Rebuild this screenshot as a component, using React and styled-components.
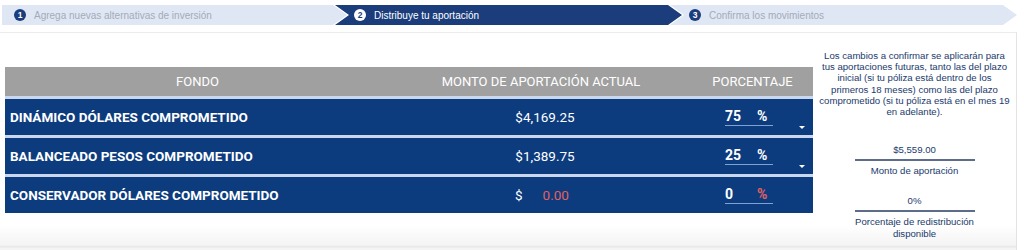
import React from "react";
import styled, { createGlobalStyle } from "styled-components";

const Global = createGlobalStyle`
  html, body { margin: 0; padding: 0; background: #ffffff; }
  body { font-family: Roboto, "Liberation Sans", Arial, sans-serif; width: 1024px; height: 250px; overflow: hidden; }
`;

const Page = styled.div`
  width: 1024px;
  height: 250px;
  display: flex;
  flex-direction: column;
  background: #fff;
`;

const Stepper = styled.div`
  display: flex;
  height: 20px;
  margin-top: 5px;
  padding-left: 2px;
  width: 1015px;
`;

const Step = styled.div`
  flex: 0 0 ${(p) => p.$w}px;
  margin-left: ${(p) => (p.$first ? 0 : -12)}px;
  height: 20px;
  display: flex;
  align-items: center;
  padding-left: ${(p) => (p.$first ? 12 : 19)}px;
  box-sizing: border-box;
  background: ${(p) => (p.$active ? "#1b3d7b" : "#dfe7f4")};
  color: ${(p) => (p.$active ? "#ffffff" : "#a3abb9")};
  font-family: "Liberation Sans", Arial, sans-serif;
  font-size: 10px;
  z-index: ${(p) => p.$z};
  clip-path: ${(p) =>
    p.$first
      ? "polygon(0 0, calc(100% - 14px) 0, 100% 50%, calc(100% - 14px) 100%, 0 100%)"
      : "polygon(0 0, calc(100% - 14px) 0, 100% 50%, calc(100% - 14px) 100%, 0 100%, 14px 50%)"};
`;

const StepNum = styled.span`
  width: 12px;
  height: 12px;
  border-radius: 50%;
  background: ${(p) => (p.$active ? "#ffffff" : "#1b3d7b")};
  color: ${(p) => (p.$active ? "#1b3d7b" : "#ffffff")};
  font-size: 8.5px;
  font-weight: bold;
  display: flex;
  align-items: center;
  justify-content: center;
  margin-right: 8px;
  flex: none;
`;

const Card = styled.div`
  margin-top: 7px;
  flex: 1;
  display: flex;
  border-top: 1px solid #ececec;
  border-right: 1px solid #e4e4e4;
  width: 1017px;
  box-sizing: border-box;
  background: linear-gradient(to bottom, #ffffff 0, #ffffff 192px, #f4f4f4 212px, #e6e6e6 214px, #f4f4f4 215px);
`;

const TableWrap = styled.div`
  width: 808px;
  margin-left: 5px;
  padding-top: 34px;
  display: flex;
  flex-direction: column;
  gap: 3px;
`;

const cols = "385px 302px 121px";

const HeaderRow = styled.div`
  display: grid;
  grid-template-columns: ${cols};
  height: 29px;
  background: #a0a0a0;
  color: #ffffff;
  font-size: 13px;
  align-items: center;
  text-align: center;
`;

const Row = styled.div`
  display: grid;
  grid-template-columns: ${cols};
  height: 36px;
  background: #0c3c7e;
  color: #ffffff;
  align-items: center;
  box-shadow: 0 -3px 0 0 #c9d8ee;
`;

const FundName = styled.div`
  font-weight: bold;
  font-size: 13.5px;
  padding-left: 5px;
`;

const Amount = styled.div`
  font-size: 13.5px;
  text-align: center;
  padding-left: 8px;
`;

const ZeroAmount = styled.div`
  font-size: 13.5px;
  display: flex;
  padding-left: 125px;
  gap: 20px;
`;

const Red = styled.span`
  color: #e46060;
`;

const PctCell = styled.div`
  position: relative;
  height: 100%;
  display: flex;
  align-items: center;
  padding-left: 33px;
`;

const PctInput = styled.div`
  width: 48px;
  border-bottom: 1px solid #7fa2d4;
  display: flex;
  font-weight: bold;
  font-size: 14px;
  padding-bottom: 1px;
`;

const PctValue = styled.span`
  width: 32px;
`;

const PctSign = styled.span`
  color: ${(p) => (p.$red ? "#e46060" : "#ffffff")};
`;

const Caret = styled.span`
  position: absolute;
  right: 8px;
  top: 27px;
  width: 0;
  height: 0;
  border-left: 3px solid transparent;
  border-right: 3px solid transparent;
  border-top: 3px solid #ffffff;
`;

const Side = styled.div`
  flex: 1;
  display: flex;
  flex-direction: column;
  align-items: center;
  font-family: "Liberation Sans", Arial, sans-serif;
  color: #223a6c;
  font-size: 9.6px;
  padding-top: 17px;
`;

const Note = styled.div`
  text-align: center;
  line-height: 11.2px;
  white-space: nowrap;
`;

const Figure = styled.div`
  margin-top: ${(p) => p.$mt}px;
  width: 120px;
  text-align: center;
  line-height: 12px;
  padding-bottom: 3px;
  border-bottom: 2px solid #5d6c88;
`;

const Label = styled.div`
  margin-top: 4px;
  text-align: center;
  line-height: 12px;
`;

const steps = [
  { n: 1, t: "Agrega nuevas alternativas de inversión", w: 345 },
  { n: 2, t: "Distribuye tu aportación", w: 347, active: true },
  { n: 3, t: "Confirma los movimientos", w: 347 },
];

const funds = [
  { name: "DINÁMICO DÓLARES COMPROMETIDO", amount: "$4,169.25", pct: "75", caret: true },
  { name: "BALANCEADO PESOS COMPROMETIDO", amount: "$1,389.75", pct: "25", caret: true },
  { name: "CONSERVADOR DÓLARES COMPROMETIDO", amount: null, pct: "0", caret: false },
];

const noteLines = [
  "Los cambios a confirmar se aplicarán para",
  "tus aportaciones futuras, tanto las del plazo",
  "inicial (si tu póliza está dentro de los",
  "primeros 18 meses) como las del plazo",
  "comprometido (si tu póliza está en el mes 19",
  "en adelante).",
];

export default function App() {
  return (
    <Page>
      <Global />
      <Stepper>
        {steps.map((s, i) => (
          <Step key={s.n} $w={s.w} $first={i === 0} $active={s.active} $z={3 - i}>
            <StepNum $active={s.active}>{s.n}</StepNum>
            {s.t}
          </Step>
        ))}
      </Stepper>
      <Card>
        <TableWrap>
          <HeaderRow>
            <div>FONDO</div>
            <div>MONTO DE APORTACIÓN ACTUAL</div>
            <div>PORCENTAJE</div>
          </HeaderRow>
          {funds.map((f) => (
            <Row key={f.name}>
              <FundName>{f.name}</FundName>
              {f.amount ? (
                <Amount>{f.amount}</Amount>
              ) : (
                <ZeroAmount>
                  <span>$</span>
                  <Red>0.00</Red>
                </ZeroAmount>
              )}
              <PctCell>
                <PctInput>
                  <PctValue>{f.pct}</PctValue>
                  <PctSign $red={!f.caret}>%</PctSign>
                </PctInput>
                {f.caret && <Caret />}
              </PctCell>
            </Row>
          ))}
        </TableWrap>
        <Side>
          <Note>
            {noteLines.map((l, i) => (
              <React.Fragment key={i}>
                {l}
                {i < noteLines.length - 1 && <br />}
              </React.Fragment>
            ))}
          </Note>
          <Figure $mt={27}>$5,559.00</Figure>
          <Label>Monto de aportación</Label>
          <Figure $mt={18}>0%</Figure>
          <Label>
            Porcentaje de redistribución
            <br />
            disponible
          </Label>
        </Side>
      </Card>
    </Page>
  );
}
